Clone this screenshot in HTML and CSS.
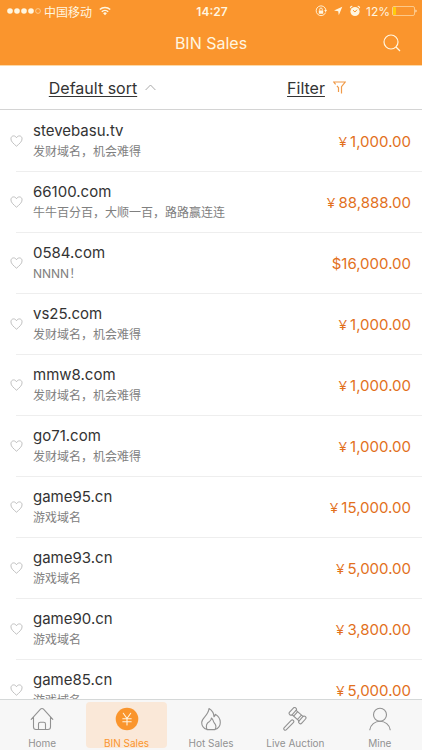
FILE: index.html
```html
<!DOCTYPE html>
<html lang="en">
<head>
<meta charset="utf-8">
<meta name="viewport" content="width=device-width, initial-scale=1">
<title>BIN Sales</title>
<link rel="stylesheet" href="styles.css">
</head>
<body>
<svg class="sprite" aria-hidden="true">
  <symbol id="heart" viewBox="0 0 14 14"><path d="M7 12.6C4 10 1 7.700 1 4.700C1 2.800 2.300 1.500 3.900 1.500C5.300 1.500 6.400 2.300 7 3.500C7.600 2.300 8.700 1.500 10.100 1.500C11.700 1.500 13 2.800 13 4.700C13 7.700 10 10 7 12.600Z"/></symbol>
</svg>
<div class="app">
  <header class="header">
    <div class="status">
      <div class="status-side">
        <svg class="signal" viewBox="0 0 34 8" aria-hidden="true"><circle cx="3" cy="4" r="2.800"/><circle cx="10" cy="4" r="2.800"/><circle cx="17" cy="4" r="2.800"/><circle cx="24" cy="4" r="2.800"/><circle class="hollow" cx="31" cy="4" r="2.400"/></svg>
        <span class="carrier">中国移动</span>
        <svg class="wifi" viewBox="0 0 12 10" aria-hidden="true"><path d="M.8 3.500a7.500 7.500 0 0 1 10.400 0M2.800 5.700a4.600 4.600 0 0 1 6.400 0"/><path class="solid" d="M6 9.300 4.100 7.300a2.700 2.700 0 0 1 3.800 0Z"/></svg>
      </div>
      <time class="clock">14:27</time>
      <div class="status-side status-end">
        <svg class="mini" viewBox="0 0 12 12" aria-hidden="true"><path class="line" d="M10.600 7.600A4.900 4.900 0 1 1 10.900 5"/><path d="M9.200 5h2.800l-1.400 2.200ZM3.800 5.500h4.400v3.200H3.800Z"/><path class="line" d="M4.700 5.500V4.300a1.300 1.300 0 0 1 2.600 0v1.200"/></svg>
        <svg class="mini" viewBox="0 0 12 12" aria-hidden="true"><path d="M10.300 1.800 6.800 10.200 6.200 6.200 2 5.500Z"/></svg>
        <svg class="mini" viewBox="0 0 12 12" aria-hidden="true"><circle cx="6" cy="6.500" r="4.600"/><path d="M1 3.600a2 2 0 0 1 2.800-2.500ZM11 3.600a2 2 0 0 0-2.800-2.500Z"/><path class="hands" d="M4 5.200 6 7l2-2.300"/></svg>
        <span class="percent">12%</span>
        <svg class="battery" viewBox="0 0 25 10" aria-hidden="true"><rect class="shell" x=".5" y=".5" width="22" height="9" rx="1.500"/><rect class="charge" x="1" y="1" width="3" height="8" rx="1"/><path d="M23.500 3.500a1.600 1.600 0 0 1 0 3Z"/></svg>
      </div>
    </div>
    <div class="titlebar">
      <h1>BIN Sales</h1>
      <button class="search" aria-label="Search"><svg viewBox="0 0 18 18" aria-hidden="true"><circle cx="8" cy="8" r="7"/><path d="m13 13 4 4"/></svg></button>
    </div>
  </header>
  <div class="tools">
    <button class="tool sort"><span>Default sort</span><svg class="caret" viewBox="0 0 11 7" aria-hidden="true"><path d="m.6 6 4.900-5 4.900 5"/></svg></button>
    <button class="tool"><span>Filter</span><svg class="funnel" viewBox="0 0 13 13" aria-hidden="true"><path d="M5.500 11V6.700L4 5M2.600 3.300.8 1h11.400L8.500 5.700v6.800"/></svg></button>
  </div>
  <main class="list">
    <ul>
      <li class="row"><button class="fav" aria-label="Favourite"><svg><use href="#heart"/></svg></button><div class="info"><h2>stevebasu.tv</h2><p>发财域名，机会难得</p></div><span class="price"><span class="yen">¥</span>1,000.00</span></li>
      <li class="row"><button class="fav" aria-label="Favourite"><svg><use href="#heart"/></svg></button><div class="info"><h2>66100.com</h2><p>牛牛百分百，大顺一百，路路赢连连</p></div><span class="price"><span class="yen">¥</span>88,888.00</span></li>
      <li class="row"><button class="fav" aria-label="Favourite"><svg><use href="#heart"/></svg></button><div class="info"><h2>0584.com</h2><p>NNNN！</p></div><span class="price">$16,000.00</span></li>
      <li class="row"><button class="fav" aria-label="Favourite"><svg><use href="#heart"/></svg></button><div class="info"><h2>vs25.com</h2><p>发财域名，机会难得</p></div><span class="price"><span class="yen">¥</span>1,000.00</span></li>
      <li class="row"><button class="fav" aria-label="Favourite"><svg><use href="#heart"/></svg></button><div class="info"><h2>mmw8.com</h2><p>发财域名，机会难得</p></div><span class="price"><span class="yen">¥</span>1,000.00</span></li>
      <li class="row"><button class="fav" aria-label="Favourite"><svg><use href="#heart"/></svg></button><div class="info"><h2>go71.com</h2><p>发财域名，机会难得</p></div><span class="price"><span class="yen">¥</span>1,000.00</span></li>
      <li class="row"><button class="fav" aria-label="Favourite"><svg><use href="#heart"/></svg></button><div class="info"><h2>game95.cn</h2><p>游戏域名</p></div><span class="price"><span class="yen">¥</span>15,000.00</span></li>
      <li class="row"><button class="fav" aria-label="Favourite"><svg><use href="#heart"/></svg></button><div class="info"><h2>game93.cn</h2><p>游戏域名</p></div><span class="price"><span class="yen">¥</span>5,000.00</span></li>
      <li class="row"><button class="fav" aria-label="Favourite"><svg><use href="#heart"/></svg></button><div class="info"><h2>game90.cn</h2><p>游戏域名</p></div><span class="price"><span class="yen">¥</span>3,800.00</span></li>
      <li class="row"><button class="fav" aria-label="Favourite"><svg><use href="#heart"/></svg></button><div class="info"><h2>game85.cn</h2><p>游戏域名</p></div><span class="price"><span class="yen">¥</span>5,000.00</span></li>
    </ul>
  </main>
  <nav class="tabs">
    <a class="tab" href="#home"><svg viewBox="0 0 24 24" aria-hidden="true"><path d="M1.200 12.400 10.500 2.200a2 2 0 0 1 3 0l9.300 10.200M3.500 10.300V20a2.500 2.500 0 0 0 2.500 2.500h12a2.500 2.500 0 0 0 2.500-2.500v-9.700M8.500 22.500v-5.500a1.800 1.800 0 0 1 1.800-1.800h3.400a1.800 1.800 0 0 1 1.800 1.800v5.500"/></svg><span>Home</span></a>
    <a class="tab active" href="#bin" aria-current="page"><svg viewBox="0 0 24 24" aria-hidden="true"><circle cx="12" cy="12" r="11.300"/><path d="m8.300 6.300 3.700 5.200 3.700-5.200M12 11.500v6.500M7.800 11.800h8.400M7.800 14.800h8.400"/></svg><span>BIN Sales</span></a>
    <a class="tab" href="#hot"><svg viewBox="0 0 24 24" aria-hidden="true"><path d="M8 22.600C4.600 21.400 2.700 18.700 2.700 15.500C2.700 10.800 9.500 8.500 10 1.500C13.300 3.500 15 6.300 15 9.800C15.800 9.200 16.200 8.300 16.300 7.200C19.500 9 21.300 12.200 21.300 15.500C21.300 18.700 19.400 21.400 16 22.600ZM8 22.600C6.500 18.500 8 15.800 10.500 14.500C11.800 13.700 12.300 12.500 12.400 11C14.500 12.200 13.800 14.300 15.300 16C17.300 18 17.300 20.300 16 22.600"/></svg><span>Hot Sales</span></a>
    <a class="tab" href="#auction"><svg viewBox="0 0 24 24" aria-hidden="true"><g transform="translate(1 0) rotate(42 14 9)"><rect x="5.200" y="4.500" width="3.600" height="9" rx="1.700"/><rect x="18" y="4.500" width="3.600" height="9" rx="1.700"/><path d="M8.800 6h9.200M8.800 12h9.200M10.900 6v6M15.900 6v6"/></g><rect x="-.7" y="16.600" width="13" height="3" rx="1.500" transform="rotate(-46 5.800 18.100)"/></svg><span>Live Auction</span></a>
    <a class="tab" href="#mine"><svg viewBox="0 0 24 24" aria-hidden="true"><circle cx="12" cy="7.800" r="6.500"/><path d="M1.800 22.800c.8-5 5-8.500 10.200-8.500s9.400 3.500 10.200 8.500"/></svg><span>Mine</span></a>
  </nav>
</div>
</body>
</html>
```
FILE: styles.css
```css
* { box-sizing: border-box; }
body, h1, h2, p, ul { margin: 0; padding: 0; }
body {
  font-family: Inter, "Noto Sans CJK SC", sans-serif;
  color: #333;
  background: #fff;
}
button {
  padding: 0;
  border: 0;
  background: none;
  font: inherit;
  color: inherit;
}
svg { display: block; flex: none; }
.sprite { position: absolute; width: 0; height: 0; }
.app { display: flex; flex-direction: column; height: 100vh; }

.header {
  flex: none;
  background: #fa952d;
  border-bottom: 1px solid #fcd9a8;
  color: #fff6e0;
}
.status {
  display: grid;
  grid-template-columns: 1fr auto 1fr;
  align-items: center;
  height: 22px;
  padding: 0 5px 0 7px;
  font-size: 12px;
}
.status-side { display: flex; align-items: center; gap: 3px; }
.status-end { justify-content: flex-end; gap: 2px; }
.status svg { fill: #fff6e0; }
.signal { width: 34px; height: 8px; }
.status .hollow, .status .shell { fill: none; stroke: #fdd5a0; stroke-width: 0.8; }
.wifi { width: 12px; height: 10px; margin-left: 4px; }
.status .wifi { fill: none; stroke: #fff6e0; stroke-width: 1.5; }
.status .solid { fill: #fff6e0; stroke: none; }
.clock { font-weight: 600; }
.mini { width: 12px; height: 12px; margin-right: 3px; }
.status .line { fill: none; stroke: #fff6e0; stroke-width: 0.9; }
.status .hands { fill: none; stroke: #fa952d; stroke-width: 1; }
.battery { width: 25px; height: 10px; }
.status .charge { fill: #ffcc0a; }
.titlebar {
  display: grid;
  grid-template-columns: 1fr auto 1fr;
  align-items: center;
  height: 43px;
  padding: 0 21px 2px;
}
.titlebar h1 { grid-column: 2; font-size: 16px; font-weight: 400; }
.search { justify-self: end; }
.search svg { width: 18px; height: 18px; fill: none; stroke: #fff6e0; stroke-width: 1.2; }

.tools {
  flex: none;
  display: grid;
  grid-template-columns: 1fr 1fr;
  height: 44px;
  border-bottom: 1px solid #d4d4d4;
}
.tool {
  display: flex;
  align-items: center;
  justify-content: center;
  gap: 8px;
  font-size: 16px;
}
.sort { padding-right: 6px; }
.tool span { text-decoration: underline; text-underline-offset: 2px; text-decoration-skip-ink: none; }
.caret { width: 11px; height: 7px; fill: none; stroke: #aaa; }
.funnel { width: 13px; height: 13px; fill: none; stroke: #f09a48; stroke-width: 1.2; }

.list { flex: 1; min-height: 0; overflow: hidden; padding-top: 1px; }
.list ul { list-style: none; padding-left: 16px; }
.row {
  display: flex;
  align-items: center;
  height: 61px;
  padding-right: 11px;
  border-bottom: 1px solid #eee;
}
.row h2 { font-size: 15px; line-height: 20px; font-weight: 400; }
.row p { font-size: 12px; line-height: 18px; margin-top: 2px; color: #808080; }
.fav { margin-left: -6px; margin-right: 10px; }
.fav svg { width: 13px; height: 14px; fill: none; stroke: #bbb; }
.info { flex: 1; }
.price { font-size: 15px; color: #e2701c; }
.yen { font-family: "Noto Sans", sans-serif; font-size: 15px; line-height: 1; margin-right: 3px; }

.tabs {
  flex: none;
  display: grid;
  grid-template-columns: repeat(5, 1fr);
  height: 51px;
  padding-top: 2px;
  border-top: 1px solid #d5d8d8;
  background: #f7f7f7;
}
.tab {
  display: flex;
  flex-direction: column;
  align-items: center;
  gap: 5px;
  height: 46px;
  margin: 0 2px;
  padding-top: 5px;
  border-radius: 4px;
  font-size: 10px;
  line-height: 14px;
  color: #929292;
  text-decoration: none;
}
.tab svg { width: 24px; height: 24px; fill: none; stroke: #929292; stroke-width: 1.100; stroke-linecap: round; stroke-linejoin: round; }
.active { background: #fae8d8; color: #fa952d; }
.active circle { fill: #fa952d; stroke: none; }
.active svg { stroke: #fff3df; }
```
